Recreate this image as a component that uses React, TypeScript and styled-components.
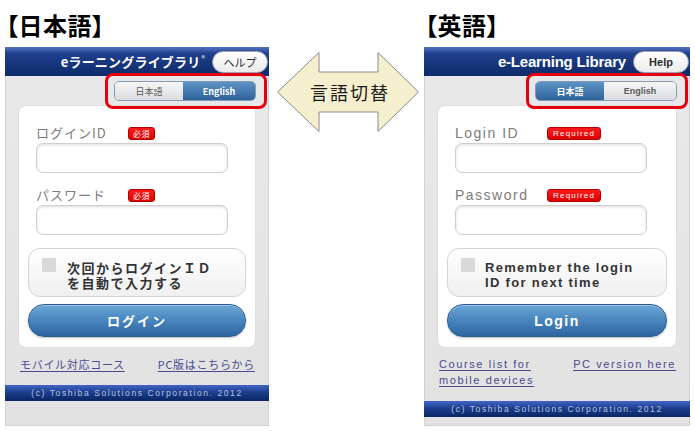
import React from 'react';
import styled, { createGlobalStyle } from 'styled-components';

type Lang = 'ja' | 'en';

const JA = '"Noto Sans CJK JP", sans-serif';
const EN = '"Liberation Sans", "Noto Sans CJK JP", sans-serif';

const GlobalStyle = createGlobalStyle`
  html, body {
    margin: 0;
    padding: 0;
    background: #ffffff;
  }
  * {
    box-sizing: border-box;
  }
`;

const Page = styled.div`
  width: 695px;
  height: 431px;
  display: flex;
  align-items: flex-start;
  padding-left: 5px;
  overflow: hidden;
`;

const Column = styled.div<{ $w: number }>`
  width: ${(p) => p.$w}px;
  display: flex;
  flex-direction: column;
`;

const Heading = styled.div`
  height: 47px;
  padding-top: 13px;
  margin-left: 1px;
  font-family: ${JA};
  font-weight: 700;
  font-size: 24px;
  line-height: 24px;
  font-feature-settings: 'palt';
  letter-spacing: 0.5px;
  color: #000;
`;

const Phone = styled.div`
  height: 379px;
  display: flex;
  flex-direction: column;
  background: linear-gradient(#e9e9e9, #e2e2e2);
  border-left: 1px solid #d2d2d2;
  border-right: 1px solid #d2d2d2;
  border-bottom: 1px solid #d2d2d2;
`;

const PhoneHeader = styled.div`
  height: 29px;
  display: flex;
  align-items: center;
  justify-content: flex-end;
  gap: 7px;
  padding-right: 1px;
  margin: 0 -1px;
  background: linear-gradient(#5573c4 0%, #1f3f8c 22%, #0f2b6b 100%);
`;

const AppTitle = styled.div<{ $lang: Lang }>`
  font-family: ${(p) => (p.$lang === 'ja' ? JA : EN)};
  font-weight: 700;
  font-size: ${(p) => (p.$lang === 'ja' ? 13 : 15)}px;
  letter-spacing: ${(p) => (p.$lang === 'ja' ? 0.2 : -0.2)}px;
  color: #ffffff;
  white-space: nowrap;
  sup {
    font-size: 7px;
    font-weight: 400;
    vertical-align: 6px;
    margin-left: 1px;
  }
`;

const HelpButton = styled.div<{ $lang: Lang }>`
  width: 56px;
  height: 22px;
  border-radius: 11px;
  display: flex;
  align-items: center;
  justify-content: center;
  background: linear-gradient(#ffffff, #ececec);
  border: 1px solid #9aa2b4;
  font-family: ${(p) => (p.$lang === 'ja' ? JA : EN)};
  font-weight: ${(p) => (p.$lang === 'ja' ? 400 : 700)};
  font-size: 11px;
  color: #2a2a2a;
`;

const LangRow = styled.div`
  display: flex;
  justify-content: flex-end;
  padding: 5px 12px 0 0;
`;

const Segment = styled.div`
  position: relative;
  width: 142px;
  height: 20px;
  display: grid;
  grid-template-columns: 68px 1fr;
  border: 1px solid #7f9cb9;
  border-radius: 5px;

  &::before {
    content: '';
    position: absolute;
    top: -9px;
    bottom: -9px;
    left: -10px;
    right: -12px;
    border: 3px solid #e6000f;
    border-radius: 8px;
    pointer-events: none;
  }
`;

const SegButton = styled.div<{ $active: boolean; $lang: Lang; $side: 'l' | 'r' }>`
  display: flex;
  align-items: center;
  justify-content: center;
  font-family: ${(p) => (p.$lang === 'ja' ? JA : EN)};
  font-size: 9px;
  font-weight: ${(p) => (p.$active || p.$lang === 'en' ? 700 : 400)};
  color: ${(p) => (p.$active ? '#ffffff' : '#5a5a5a')};
  background: ${(p) =>
    p.$active
      ? 'linear-gradient(#5d93c6, #2f6198)'
      : 'linear-gradient(#f6f6f6, #dcdde0)'};
  border-radius: ${(p) => (p.$side === 'l' ? '4px 0 0 4px' : '0 4px 4px 0')};
`;

const Card = styled.div`
  margin: 4px 12px 0 12px;
  padding: 16px 9px 10px;
  background: #ffffff;
  border-radius: 8px;
  border: 1px solid #dedede;
  display: flex;
  flex-direction: column;
`;

const LabelRow = styled.div<{ $first?: boolean }>`
  height: 21px;
  margin: ${(p) => (p.$first ? 0 : 11)}px 0 0 8px;
  display: flex;
  align-items: center;
`;

const FieldLabel = styled.span<{ $lang: Lang }>`
  width: 92px;
  font-family: ${(p) => (p.$lang === 'ja' ? JA : EN)};
  font-size: ${(p) => (p.$lang === 'ja' ? 13 : 14)}px;
  letter-spacing: ${(p) => (p.$lang === 'ja' ? 1 : 1.5)}px;
  color: #7c7c7c;
`;

const Badge = styled.span<{ $lang: Lang }>`
  height: 13px;
  padding: 0 ${(p) => (p.$lang === 'ja' ? 4 : 5)}px;
  display: inline-flex;
  align-items: center;
  border-radius: 3px;
  background: linear-gradient(#ff1a1a, #dd0000);
  border: 1px solid #b40000;
  font-family: ${(p) => (p.$lang === 'ja' ? JA : EN)};
  font-size: 8px;
  letter-spacing: ${(p) => (p.$lang === 'ja' ? 0.5 : 1.2)}px;
  color: #ffffff;
  margin-top: 1px;
`;

const Input = styled.input`
  appearance: none;
  width: 192px;
  height: 30px;
  margin: 0 0 0 8px;
  padding: 0 8px;
  border: 1px solid #cfcfcf;
  border-radius: 7px;
  background: #ffffff;
  box-shadow: inset 0 1px 3px rgba(0, 0, 0, 0.14);
  outline: none;
`;

const RememberBox = styled.div<{ $lang: Lang }>`
  margin-top: 13px;
  height: 49px;
  display: flex;
  align-items: flex-start;
  gap: ${(p) => (p.$lang === 'ja' ? 11 : 10)}px;
  padding: 11px 10px 0 13px;
  border: 1px solid #d4d4d4;
  border-radius: 12px;
  background: linear-gradient(#ffffff, #f0f0f0);
`;

const CheckSquare = styled.span`
  flex: none;
  width: 14px;
  height: 14px;
  margin-top: -2px;
  background: #d9d9d9;
  border-radius: 1px;
`;

const RememberText = styled.div<{ $lang: Lang }>`
  font-family: ${(p) => (p.$lang === 'ja' ? JA : EN)};
  font-weight: 700;
  font-size: 13px;
  line-height: 15px;
  letter-spacing: ${(p) => (p.$lang === 'ja' ? 1.5 : 1.3)}px;
  color: #333333;
`;

const LoginButton = styled.div<{ $lang: Lang }>`
  margin-top: 7px;
  height: 33px;
  border-radius: 16px;
  display: flex;
  align-items: center;
  justify-content: center;
  background: linear-gradient(#6aa6d6 0%, #4b88c0 45%, #2d64a0 100%);
  border: 1px solid #2b5b8f;
  box-shadow: inset 0 1px 0 rgba(255, 255, 255, 0.35), 0 1px 2px rgba(0, 0, 0, 0.25);
  font-family: ${(p) => (p.$lang === 'ja' ? JA : EN)};
  font-weight: 700;
  font-size: ${(p) => (p.$lang === 'ja' ? 13 : 14)}px;
  letter-spacing: ${(p) => (p.$lang === 'ja' ? 2 : 1.5)}px;
  color: #ffffff;
`;

const LinkRow = styled.div`
  margin-top: 8px;
  padding: 0 13px 0 14px;
  display: flex;
  justify-content: space-between;
  align-items: flex-start;
`;

const FooterLink = styled.a<{ $lang: Lang }>`
  font-family: ${(p) => (p.$lang === 'ja' ? JA : EN)};
  font-size: 11px;
  line-height: 16px;
  letter-spacing: ${(p) => (p.$lang === 'ja' ? 0.7 : 1.6)}px;
  color: #4a4a8e;
  text-decoration: underline;
  text-underline-offset: 2px;
  white-space: pre-line;
`;

const Footer = styled.div`
  margin: 13px -1px 0;
  height: 16px;
  display: flex;
  align-items: center;
  justify-content: center;
  background: linear-gradient(#4266c6 0%, #1b3f8e 45%, #082462 100%);
  font-family: ${EN};
  font-size: 8.5px;
  letter-spacing: 1.6px;
  color: #b8c1da;
`;

const ArrowColumn = styled.div`
  width: 155px;
  padding: 52px 0 0 8px;
`;

const ArrowShape = styled.div`
  display: grid;
  width: 142px;
  height: 80px;
  & > * {
    grid-area: 1 / 1;
  }
`;

const ArrowText = styled.span`
  align-self: center;
  justify-self: center;
  margin-left: 4px;
  font-family: ${JA};
  font-size: 18px;
  letter-spacing: 2px;
  color: #1a1a1a;
`;

type PhoneData = {
  lang: Lang;
  width: number;
  heading: string;
  title: string;
  reg?: boolean;
  help: string;
  active: Lang;
  idLabel: string;
  pwLabel: string;
  badge: string;
  remember: string[];
  login: string;
  links: string[];
};

const phones: PhoneData[] = [
  {
    lang: 'ja',
    width: 264,
    heading: '【日本語】',
    title: 'eラーニングライブラリ',
    reg: true,
    help: 'ヘルプ',
    active: 'en',
    idLabel: 'ログインID',
    pwLabel: 'パスワード',
    badge: '必須',
    remember: ['次回からログインＩＤ', 'を自動で入力する'],
    login: 'ログイン',
    links: ['モバイル対応コース', 'PC版はこちらから'],
  },
  {
    lang: 'en',
    width: 266,
    heading: '【英語】',
    title: 'e-Learning Library',
    help: 'Help',
    active: 'ja',
    idLabel: 'Login ID',
    pwLabel: 'Password',
    badge: 'Required',
    remember: ['Remember the login', 'ID for next time'],
    login: 'Login',
    links: ['Course list for\nmobile devices', 'PC version here'],
  },
];

const LoginPhone = ({ d }: { d: PhoneData }) => (
  <Column $w={d.width}>
    <Heading>{d.heading}</Heading>
    <Phone>
      <PhoneHeader>
        <AppTitle $lang={d.lang}>
          {d.title}
          {d.reg && <sup>®</sup>}
        </AppTitle>
        <HelpButton $lang={d.lang}>{d.help}</HelpButton>
      </PhoneHeader>
      <LangRow>
        <Segment>
          <SegButton $side="l" $lang={d.lang} $active={d.active === 'ja'}>
            日本語
          </SegButton>
          <SegButton $side="r" $lang={d.lang} $active={d.active === 'en'}>
            English
          </SegButton>
        </Segment>
      </LangRow>
      <Card>
        <LabelRow $first>
          <FieldLabel $lang={d.lang}>{d.idLabel}</FieldLabel>
          <Badge $lang={d.lang}>{d.badge}</Badge>
        </LabelRow>
        <Input type="text" readOnly />
        <LabelRow>
          <FieldLabel $lang={d.lang}>{d.pwLabel}</FieldLabel>
          <Badge $lang={d.lang}>{d.badge}</Badge>
        </LabelRow>
        <Input type="password" readOnly />
        <RememberBox $lang={d.lang}>
          <CheckSquare />
          <RememberText $lang={d.lang}>
            {d.remember[0]}
            <br />
            {d.remember[1]}
          </RememberText>
        </RememberBox>
        <LoginButton $lang={d.lang}>{d.login}</LoginButton>
      </Card>
      <LinkRow>
        {d.links.map((l) => (
          <FooterLink key={l} $lang={d.lang}>
            {l}
          </FooterLink>
        ))}
      </LinkRow>
      <Footer>(c) Toshiba Solutions Corporation. 2012</Footer>
    </Phone>
  </Column>
);

const App = () => (
  <Page>
    <GlobalStyle />
    <LoginPhone d={phones[0]} />
    <ArrowColumn>
      <ArrowShape>
        <svg width="142" height="80" viewBox="0 0 142 80">
          <polygon
            points="0.5,40 42,0.5 42,20 101,20 101,0.5 141.5,40 101,79.5 101,60 42,60 42,79.5"
            fill="#f6efcd"
            stroke="#8a8a8a"
            strokeWidth="1"
          />
        </svg>
        <ArrowText>言語切替</ArrowText>
      </ArrowShape>
    </ArrowColumn>
    <LoginPhone d={phones[1]} />
  </Page>
);

export default App;
